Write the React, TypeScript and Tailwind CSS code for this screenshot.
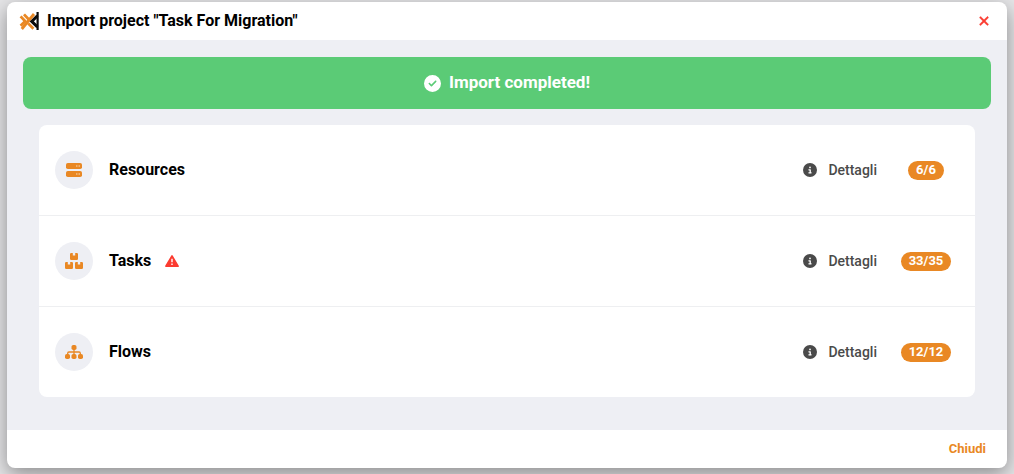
import type { ReactNode } from 'react';
import { FaCircleCheck, FaCircleInfo, FaXmark } from 'react-icons/fa6';

interface ImportSection {
  name: string;
  icon: ReactNode;
  imported: number;
  total: number;
}

const Logo = () => (
  <svg width="20" height="20" viewBox="0 0 20 20" fill="none">
    <g stroke="#e98824" strokeWidth="2.8">
      <path d="M1.6 5.4 6.2 10.2 1.6 14.8" />
      <path d="M5 3.4 11 9.8" />
      <path d="M15 3 2.8 18" />
      <path d="M9.2 12.4 14.4 17.8" />
    </g>
    <path d="M18.6 1v18" stroke="#0b0b0b" strokeWidth="2.2" />
    <path d="M18.4 4.8 12.8 10.4l5.6 5.6" stroke="#0b0b0b" strokeWidth="3" />
  </svg>
);

const ServerIcon = () => (
  <svg width="16" height="14" viewBox="0 0 16 14" fill="currentColor">
    <rect width="16" height="6" rx="1.8" />
    <rect y="8" width="16" height="6" rx="1.8" />
    <g fill="#f8d3a8">
      <circle cx="10.8" cy="3" r=".8" />
      <circle cx="13.2" cy="3" r=".8" />
      <circle cx="10.8" cy="11" r=".8" />
      <circle cx="13.2" cy="11" r=".8" />
    </g>
  </svg>
);

const BoxesIcon = () => (
  <svg width="18" height="16" viewBox="0 0 18 16" fill="currentColor">
    <path id="box" d="M6.2 0h1.6v2.4h2.4V0h1.6q1.2 0 1.2 1.2v4.6Q13 7 11.8 7H6.2Q5 7 5 5.8V1.2Q5 0 6.2 0Z" />
    <use href="#box" x="-5" y="9" />
    <use href="#box" x="5" y="9" />
  </svg>
);

const FlowIcon = () => (
  <svg width="18" height="14" viewBox="0 0 18 14" fill="currentColor">
    <rect x="6.5" width="5" height="5" rx="1.8" />
    <rect y="9" width="5" height="5" rx="1.8" />
    <rect x="6.5" y="9" width="5" height="5" rx="1.8" />
    <rect x="13" y="9" width="5" height="5" rx="1.8" />
    <path d="M9 4v6M2.7 10V8.2q0-1.2 1.2-1.2h10.2q1.2 0 1.2 1.2V10" fill="none" stroke="currentColor" strokeWidth="1.3" />
  </svg>
);

const WarningIcon = () => (
  <svg width="14" height="12" viewBox="0 0 14 12" className="ml-[14px] text-[#fb3b30]">
    <path d="M7 .9 13.1 11.2H.9Z" fill="currentColor" stroke="currentColor" strokeWidth="1.6" strokeLinejoin="round" />
    <path d="M7 3.8v3.4M7 8.6v1.4" stroke="#fff" strokeWidth="1.4" />
  </svg>
);

const sections: ImportSection[] = [
  { name: 'Resources', icon: <ServerIcon />, imported: 6, total: 6 },
  { name: 'Tasks', icon: <BoxesIcon />, imported: 33, total: 35 },
  { name: 'Flows', icon: <FlowIcon />, imported: 12, total: 12 },
];

const SectionRow = ({ name, icon, imported, total }: ImportSection) => (
  <li className="flex items-center justify-between py-[26px] pl-4">
    <div className="flex items-center">
      <span className="w-[38px] h-[38px] rounded-full bg-[#eeeff4] text-[#e98824] flex items-center justify-center">
        {icon}
      </span>
      <h2 className="ml-4 text-base leading-5 font-bold text-black">{name}</h2>
      {imported < total && <WarningIcon />}
    </div>
    <div className="flex items-center">
      <button type="button" className="flex items-center gap-[11px] text-sm font-medium text-[#4a4a4a] cursor-pointer">
        <FaCircleInfo size={14} />
        Dettagli
      </button>
      <div className="w-[98px] flex justify-center">
        <span className="h-[19px] px-2 rounded-full bg-[#e98824] text-white text-[13px] leading-[18px] font-bold">
          {imported}/{total}
        </span>
      </div>
    </div>
  </li>
);

export default function App() {
  return (
    <div className="min-h-screen bg-[#e6e6e8] px-[7px] pt-[2px] pb-1.5 flex flex-col font-['Roboto',sans-serif]">
      <section
        role="dialog"
        aria-labelledby="import-title"
        className="flex-1 flex flex-col rounded-lg overflow-hidden bg-white shadow-[0_6px_20px_rgba(0,0,0,0.4)]"
      >
        <header className="h-[38px] pl-3 pr-4 flex items-center justify-between">
          <div className="flex items-center gap-2">
            <Logo />
            <h1 id="import-title" className="text-base leading-5 font-bold text-black">
              Import project "Task For Migration"
            </h1>
          </div>
          <button type="button" aria-label="Close" className="text-[#fb3b30] cursor-pointer">
            <FaXmark size={14} strokeWidth={16} stroke="currentColor" />
          </button>
        </header>

        <main className="flex-1 bg-[#eeeff4] px-4 pt-[17px] pb-[33px]">
          <div className="h-[52px] rounded-lg bg-[#5bcb76] text-white flex items-center justify-center gap-2">
            <FaCircleCheck size={17} />
            <p className="text-[17px] font-bold">Import completed!</p>
          </div>
          <ul className="mt-4 mx-4 rounded-lg bg-white divide-y divide-[#eeeff1]">
            {sections.map((section) => (
              <SectionRow key={section.name} {...section} />
            ))}
          </ul>
        </main>

        <footer className="h-[38px] px-[21px] flex items-center justify-end">
          <button type="button" className="text-[13px] font-bold text-[#e98824] cursor-pointer">
            Chiudi
          </button>
        </footer>
      </section>
    </div>
  );
}
